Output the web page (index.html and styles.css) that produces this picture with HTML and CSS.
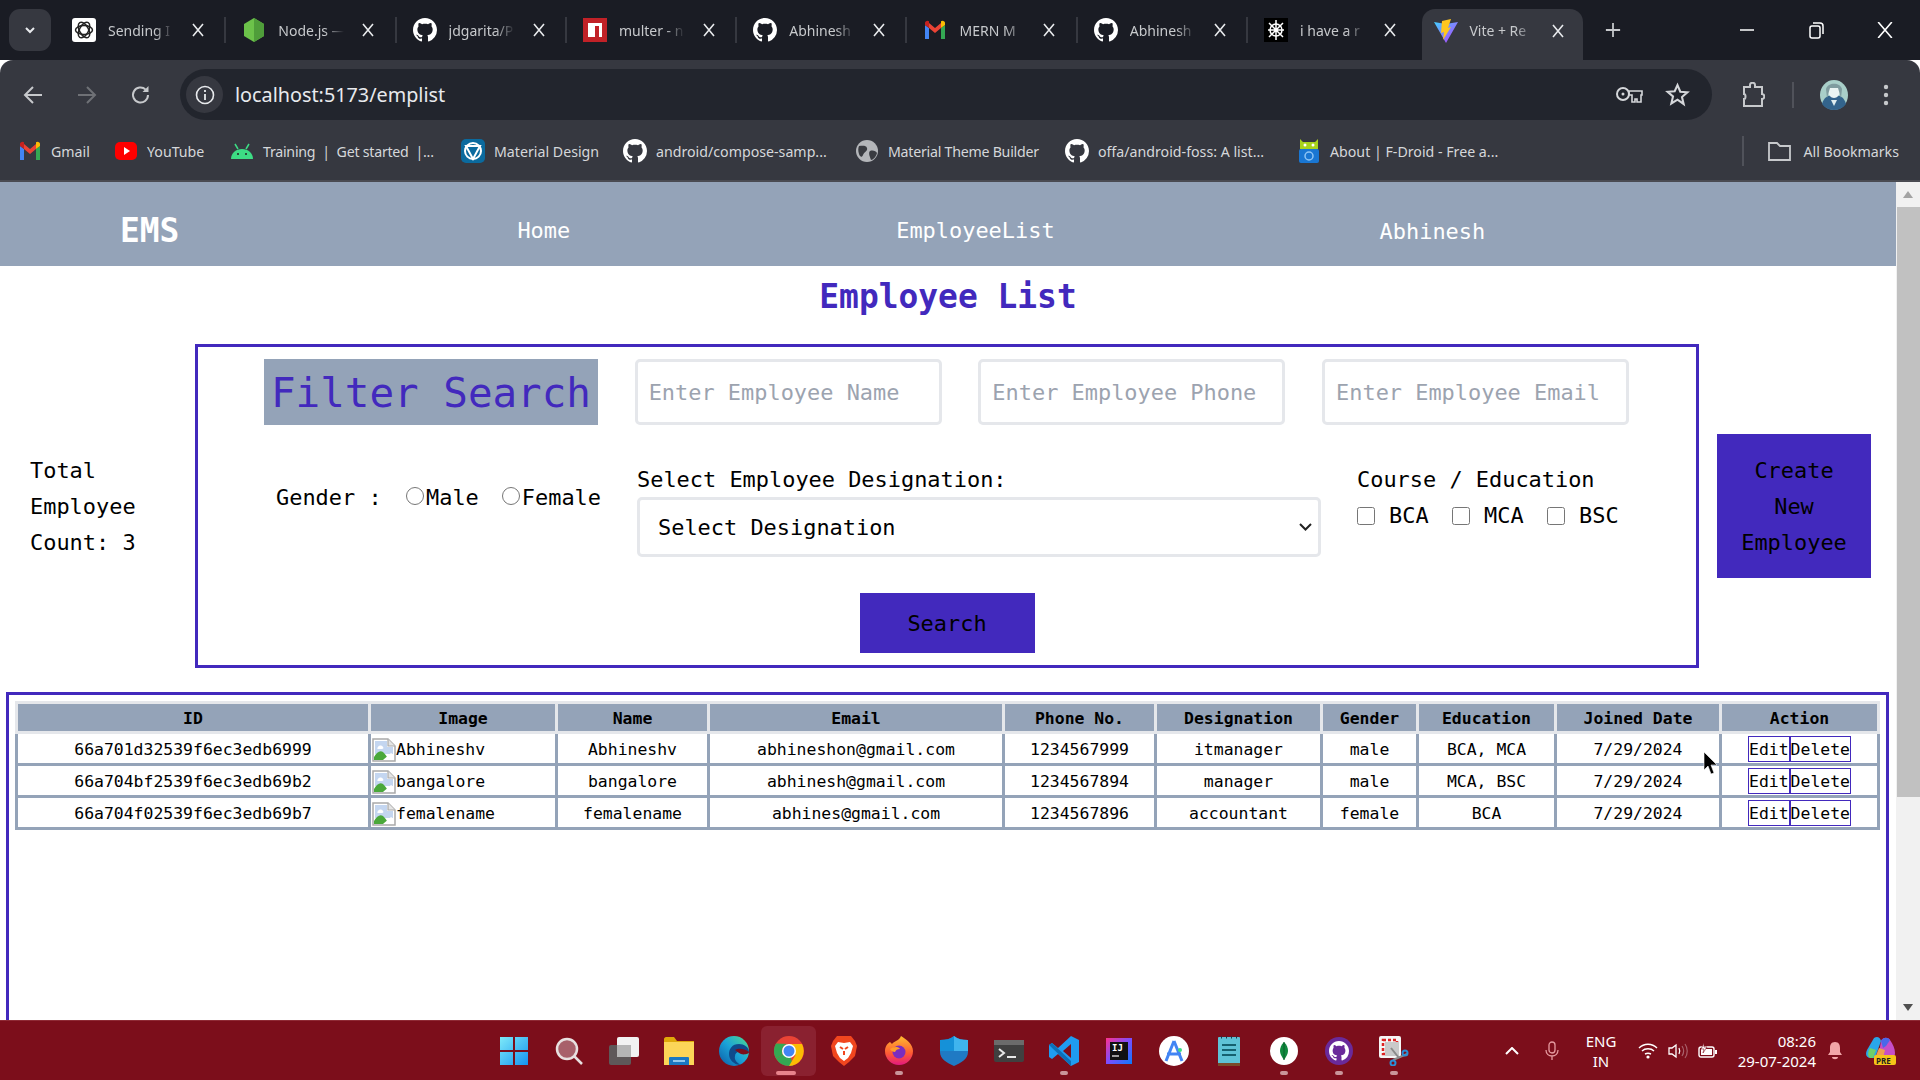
FILE: index.html
```html
<!doctype html>
<html>
<head>
<meta charset="utf-8">
<title>Vite + React</title>
<link rel="stylesheet" href="styles.css">
</head>
<body>
<svg class="defs"><symbol id="gh" viewBox="0 0 16 16"><path fill="#fff" d="M8 0C3.58 0 0 3.58 0 8c0 3.54 2.29 6.53 5.47 7.59.4.07.55-.17.55-.38 0-.19-.01-.82-.01-1.49-2.01.37-2.53-.49-2.69-.94-.09-.23-.48-.94-.82-1.13-.28-.15-.68-.52-.01-.53.63-.01 1.08.58 1.23.82.72 1.21 1.87.87 2.33.66.07-.52.28-.87.51-1.07-1.78-.2-3.64-.89-3.64-3.95 0-.87.31-1.59.82-2.15-.08-.2-.36-1.02.08-2.12 0 0 .67-.21 2.2.82.64-.18 1.32-.27 2-.27.68 0 1.36.09 2 .27 1.53-1.04 2.2-.82 2.2-.82.44 1.1.16 1.92.08 2.12.51.56.82 1.27.82 2.15 0 3.07-1.87 3.75-3.65 3.95.29.25.54.73.54 1.48 0 1.07-.01 1.93-.01 2.2 0 .21.15.46.55.38A8.013 8.013 0 0016 8c0-4.42-3.58-8-8-8z"/></symbol><symbol id="gmail" viewBox="0 0 24 24"><path fill="#4285f4" d="M2 21h4V10L2 7z"/><path fill="#34a853" d="M18 21h4V7l-4 3z"/><path fill="#ea4335" d="M6 10V5l6 5 6-5v5l-6 5z"/><path fill="#c5221f" d="M2 7V5c0-2 2.500-3 4-1.800L6 5v5z"/><path fill="#fbbc04" d="M22 7V5c0-2-2.500-3-4-1.800V10z"/></symbol><symbol id="x" viewBox="0 0 14 14"><path d="M2 1l10 12M12 1L2 13" stroke="#e8eaed" stroke-width="1.600" fill="none"/></symbol><symbol id="brokenimg" viewBox="0 0 24 24"><path d="M1 1h15l7 7v15H1z" fill="#fff" stroke="#a9a9a9" stroke-width="1.500"/><path d="M16 1v7h7" fill="#e4e4e4" stroke="#a9a9a9" stroke-width="1.200"/><path d="M3 3h12v6h6v7H3z" fill="#c4d6f0"/><path d="M6 9c1-2 4-2 5 0 1 1 0 2-1 2H6c-1 0-1-1 0-2z" fill="#fff"/><path d="M2 22v-3c3-5 6-7 9-5 2 2 5 6 6 8z" fill="#4aa83a"/><path d="M11 22l8-7 3 2v5z" fill="#fff"/></symbol></svg>
<div class="browser">
	<div class="tabstrip">
		<div class="tabsearch"><svg width="14" height="14" viewBox="0 0 14 14"><path d="M3 5l4 4 4-4" stroke="#e8eaed" stroke-width="2" fill="none"/></svg></div>
		<div class="tab">
			<svg class="fav" viewBox="0 0 24 24"><rect width="24" height="24" rx="3" fill="#fff"/><g fill="none" stroke="#222" stroke-width="1.500"><ellipse cx="12" cy="12" rx="8.500" ry="4.500"/><ellipse cx="12" cy="12" rx="8.500" ry="4.500" transform="rotate(60 12 12)"/><ellipse cx="12" cy="12" rx="8.500" ry="4.500" transform="rotate(120 12 12)"/></g></svg>
			<span class="title">Sending I</span><svg class="close"><use href="#x"/></svg>
		</div>
		<div class="tab">
			<svg class="fav" viewBox="0 0 24 24"><path d="M12 0l10 6v12l-10 6-10-6V6z" fill="#6cc24a"/><path d="M12 0l10 6v12l-10 6z" fill="#4f9d3a"/></svg>
			<span class="title">Node.js —</span><svg class="close"><use href="#x"/></svg>
		</div>
		<div class="tab">
			<svg class="fav"><use href="#gh"/></svg>
			<span class="title">jdgarita/P</span><svg class="close"><use href="#x"/></svg>
		</div>
		<div class="tab">
			<svg class="fav" viewBox="0 0 24 24"><rect width="24" height="24" fill="#c12127"/><path d="M5 5h14v14h-3V8h-4v11H5z" fill="#fff"/></svg>
			<span class="title">multer - n</span><svg class="close"><use href="#x"/></svg>
		</div>
		<div class="tab">
			<svg class="fav"><use href="#gh"/></svg>
			<span class="title">Abhinesh</span><svg class="close"><use href="#x"/></svg>
		</div>
		<div class="tab">
			<svg class="fav"><use href="#gmail"/></svg>
			<span class="title">MERN M</span><svg class="close"><use href="#x"/></svg>
		</div>
		<div class="tab">
			<svg class="fav"><use href="#gh"/></svg>
			<span class="title">Abhinesh</span><svg class="close"><use href="#x"/></svg>
		</div>
		<div class="tab last">
			<svg class="fav" viewBox="0 0 24 24"><rect width="24" height="24" fill="#000"/><g stroke="#fff" stroke-width="1.500" fill="none"><path d="M12 2v20M5 5l14 14M19 5L5 19M4 12h16"/><circle cx="12" cy="12" r="6"/></g></svg>
			<span class="title">i have a r</span><svg class="close"><use href="#x"/></svg>
		</div>
		<div class="tab active">
			<svg class="fav" viewBox="0 0 24 24"><defs><linearGradient id="vt" x1="0" y1="0" x2="1" y2="1"><stop offset="0" stop-color="#41d1ff"/><stop offset="1" stop-color="#bd34fe"/></linearGradient></defs><path d="M0 3l12 2 12-2-12 21z" fill="url(#vt)"/><path d="M17 0L8 2 7 14l3-1-1 8 8-13-3 1z" fill="#ffc61e"/></svg>
			<span class="title">Vite + Re</span><svg class="close"><use href="#x"/></svg>
		</div>
		<svg class="newtab" viewBox="0 0 18 18"><path d="M9 1v16M1 9h16" stroke="#c7c9cc" stroke-width="2"/></svg>
		<div class="winctl">
			<svg width="16" height="16" viewBox="0 0 16 16"><path d="M1 8h14" stroke="#fff" stroke-width="1.500"/></svg>
			<svg width="16" height="18" viewBox="0 0 16 18"><rect x="2" y="5" width="10" height="12" rx="2" fill="none" stroke="#fff" stroke-width="1.500"/><path d="M5 2h7c2 0 3 1 3 3v8" fill="none" stroke="#fff" stroke-width="1.500"/></svg>
			<svg width="16" height="16" viewBox="0 0 14 14"><path d="M1 0l12 14M13 0L1 14" stroke="#fff" stroke-width="1.400"/></svg>
		</div>
	</div>
	<div class="toolbar">
		<svg class="navbtn" viewBox="0 0 20 20"><path d="M19 10H2M10 2l-8 8 8 8" fill="none" stroke="#c7c9cc" stroke-width="2"/></svg>
		<svg class="navbtn fwd" viewBox="0 0 20 20"><path d="M1 10h17M10 2l8 8-8 8" fill="none" stroke="#6f7176" stroke-width="2"/></svg>
		<svg class="navbtn" viewBox="0 0 20 20"><path d="M17 10a7.500 7.500 0 1 1-2.300-5.400" fill="none" stroke="#c7c9cc" stroke-width="2"/><path d="M17.500 1v6h-6z" fill="#c7c9cc"/></svg>
		<div class="urlbar">
			<div class="infobtn"><svg width="20" height="20" viewBox="0 0 20 20"><circle cx="10" cy="10" r="8.500" fill="none" stroke="#e8eaed" stroke-width="1.600"/><path d="M10 9v6M10 5v2" stroke="#e8eaed" stroke-width="1.800"/></svg></div>
			<span class="url">localhost:5173/emplist</span>
			<svg class="key" width="28" height="18" viewBox="0 0 28 18"><circle cx="8" cy="8" r="6" fill="none" stroke="#d5d7da" stroke-width="2"/><circle cx="8" cy="8" r="1.500" fill="#d5d7da"/><path d="M14 5h13v4h-1v7h-4v-3h-2v3h-3V9h-3z" fill="none" stroke="#d5d7da" stroke-width="1.600"/></svg>
			<svg class="star" width="25" height="25" viewBox="0 0 24 24"><path d="M12 3l2.700 6.300 6.800.6-5.200 4.500 1.600 6.700L12 17l-5.900 3.600 1.600-6.700-5.200-4.500 6.800-.6z" fill="none" stroke="#d5d7da" stroke-width="2"/></svg>
		</div>
		<svg class="ext" width="23" height="26" viewBox="0 0 23 26"><path d="M2 5h6V3c0-3 5-3 5 0v2h7v7c3 0 3 5 0 5v7H2v-7c2 0 2-5 0-5z" fill="none" stroke="#c7c9cc" stroke-width="2"/></svg>
		<div class="tbsep"></div>
		<svg class="avatar" width="30" height="30" viewBox="0 0 30 30"><ellipse cx="15" cy="15" rx="14" ry="15" fill="#a9cfc9"/><path d="M3 24c2-7 6-9 12-9s10 2 12 9c-3 4-7 6-12 6s-9-2-12-6z" fill="#33648c"/><ellipse cx="15" cy="11" rx="6" ry="7" fill="#eaf4f3"/><path d="M7 9c2-7 14-7 16 0l-1 9-3-10h-8l-3 10z" fill="#7f9c9f"/><path d="M12 20l3 6 3-6z" fill="#dfeef0"/></svg>
		<svg class="dots" width="6" height="24" viewBox="0 0 6 24"><circle cx="3" cy="4" r="2.200" fill="#c7c9cc"/><circle cx="3" cy="12" r="2.200" fill="#c7c9cc"/><circle cx="3" cy="20" r="2.200" fill="#c7c9cc"/></svg>
	</div>
	<div class="bookmarks">
		<div class="bm"><svg class="bmi"><use href="#gmail"/></svg><span>Gmail</span></div>
		<div class="bm"><svg class="bmi" viewBox="0 0 24 24"><rect x="1" y="3" width="22" height="18" rx="5" fill="#f00"/><path d="M10 8v8l6-4z" fill="#fff"/></svg><span>YouTube</span></div>
		<div class="bm"><svg class="bmi" viewBox="0 0 24 24"><path d="M1 20c0-6 5-10 11-10s11 4 11 10z" fill="#3ddc84"/><path d="M5 5l3 5M19 5l-3 5" stroke="#3ddc84" stroke-width="1.500"/><circle cx="8" cy="15" r="1" fill="#222"/><circle cx="16" cy="15" r="1" fill="#222"/></svg><span class="tight">Training &nbsp;|&nbsp; Get started &nbsp;|...</span></div>
		<div class="bm"><svg class="bmi" viewBox="0 0 24 24"><rect width="24" height="24" rx="5" fill="#0b6a9e"/><circle cx="12" cy="12" r="8" fill="none" stroke="#fff" stroke-width="2"/><path d="M5 7h14l-7 13z" fill="none" stroke="#fff" stroke-width="2"/></svg><span>Material Design</span></div>
		<div class="bm"><svg class="bmi"><use href="#gh"/></svg><span>android/compose-samp...</span></div>
		<div class="bm"><svg class="bmi" viewBox="0 0 24 24"><circle cx="12" cy="12" r="11" fill="#b4b6ba"/><path d="M4 7c3 0 7-1 8 2s-3 4-4 7-3 2-4-1-1-6 0-8zM15 12c3-1 6 0 7 2-1 4-4 7-6 7-1-3-3-7-1-9z" fill="#393b41"/></svg><span class="tight">Material Theme Builder</span></div>
		<div class="bm"><svg class="bmi"><use href="#gh"/></svg><span>offa/android-foss: A list...</span></div>
		<div class="bm"><svg class="bmi" viewBox="0 0 24 24"><path d="M3 0l3 3h12l3-3v10H3z" fill="#a8d21c"/><rect x="2" y="10" width="20" height="14" rx="2" fill="#1976d2"/><circle cx="12" cy="17" r="4" fill="none" stroke="#8ec5f5" stroke-width="1.500"/><circle cx="8" cy="6" r="1.500" fill="#fff"/><circle cx="16" cy="6" r="1.500" fill="#fff"/></svg><span>About | F-Droid - Free a...</span></div>
		<div class="allbm">
			<svg class="bmi folder" viewBox="0 0 25 24"><path d="M2 4h8l3 3h10v14H2z" fill="none" stroke="#c7c9cc" stroke-width="1.800"/></svg><span>All Bookmarks</span>
		</div>
	</div>

	<div class="viewport">
		<div class="page">
			<nav class="nav">
				<span class="logo">EMS</span>
				<span class="navlink home">Home</span>
				<span class="navlink emp">EmployeeList</span>
				<span class="navlink user">Abhinesh</span>
			</nav>
			<h1 class="heading">Employee List</h1>
			<section class="filterarea">
				<div class="count">Total Employee Count: 3</div>
				<form class="filterbox">
					<div class="row1">
						<h2 class="filtertitle">Filter Search</h2>
						<input class="field" placeholder="Enter Employee Name">
						<input class="field" placeholder="Enter Employee Phone">
						<input class="field" placeholder="Enter Employee Email">
					</div>
					<div class="row2">
						<div class="gender">
							<span class="genderlabel">Gender :</span>
							<label class="opt"><input type="radio" name="g">Male</label>
							<label class="opt"><input type="radio" name="g">Female</label>
						</div>
						<div class="desig">
							<label class="lbl">Select Employee Designation:</label>
							<div class="selwrap">
								<select class="sel"><option>Select Designation</option></select>
								<svg class="chev" width="13" height="8" viewBox="0 0 13 8"><path d="M1 1l5.500 5.500L12 1" fill="none" stroke="#222" stroke-width="2"/></svg>
							</div>
						</div>
						<div class="course">
							<div class="lbl">Course / Education</div>
							<div class="checks">
								<label class="chk"><input type="checkbox">BCA</label>
								<label class="chk"><input type="checkbox">MCA</label>
								<label class="chk"><input type="checkbox">BSC</label>
							</div>
						</div>
					</div>
					<button type="button" class="searchbtn">Search</button>
				</form>
				<button type="button" class="createbtn">Create New Employee</button>
			</section>
			<section class="tablepanel">
				<table class="emptable">
					<thead>
						<tr><th>ID</th><th>Image</th><th>Name</th><th>Email</th><th>Phone No.</th><th>Designation</th><th>Gender</th><th>Education</th><th>Joined Date</th><th>Action</th></tr>
					</thead>
					<tbody>
						<tr><td>66a701d32539f6ec3edb6999</td><td class="imgcell"><svg class="broken"><use href="#brokenimg"/></svg>Abhineshv</td><td>Abhineshv</td><td>abhineshon@gmail.com</td><td>1234567999</td><td>itmanager</td><td>male</td><td>BCA, MCA</td><td>7/29/2024</td><td class="actcell"><button class="act">Edit</button><button class="act">Delete</button></td></tr>
						<tr><td>66a704bf2539f6ec3edb69b2</td><td class="imgcell"><svg class="broken"><use href="#brokenimg"/></svg>bangalore</td><td>bangalore</td><td>abhinesh@gmail.com</td><td>1234567894</td><td>manager</td><td>male</td><td>MCA, BSC</td><td>7/29/2024</td><td class="actcell"><button class="act">Edit</button><button class="act">Delete</button></td></tr>
						<tr><td>66a704f02539f6ec3edb69b7</td><td class="imgcell"><svg class="broken"><use href="#brokenimg"/></svg>femalename</td><td>femalename</td><td>abhines@gmail.com</td><td>1234567896</td><td>accountant</td><td>female</td><td>BCA</td><td>7/29/2024</td><td class="actcell"><button class="act">Edit</button><button class="act">Delete</button></td></tr>
					</tbody>
				</table>
			</section>
			<svg class="cursor" width="14" height="23" viewBox="0 0 14 23"><path d="M1 0v18l4-4 3 8 3-1-3-8h6z" fill="#000" stroke="#fff" stroke-width=".6"/></svg>
		</div>
		<div class="scrollbar">
			<div class="sbbtn"><svg width="10" height="7" viewBox="0 0 10 7"><path d="M5 0l5 7H0z" fill="#a3a3a3"/></svg></div>
			<div class="sbthumb"></div>
			<div class="sbrest"></div>
			<div class="sbbtn"><svg width="10" height="7" viewBox="0 0 10 7"><path d="M0 0h10L5 7z" fill="#505050"/></svg></div>
		</div>
	</div>

	<div class="taskbar">
		<div class="taskicons">
			<div class="ti"><svg width="30" height="30" viewBox="0 0 30 30"><defs><linearGradient id="wn" x1="0" y1="0" x2="1" y2="1"><stop offset="0" stop-color="#7eeaf8"/><stop offset="1" stop-color="#1593f0"/></linearGradient></defs><path d="M1 1h13v13H1zM16 1h13v13H16zM1 16h13v13H1zM16 16h13v13H16z" fill="url(#wn)"/></svg></div>
			<div class="ti"><svg width="28" height="28" viewBox="0 0 28 28"><circle cx="12" cy="12" r="10" fill="#a8606a" stroke="#e8e0e0" stroke-width="2.500"/><path d="M19 19l8 8" stroke="#e8e0e0" stroke-width="2.500"/></svg></div>
			<div class="ti"><svg width="30" height="28" viewBox="0 0 30 28"><rect x="8" y="0" width="22" height="20" rx="2" fill="#f2f2f2"/><rect x="0" y="8" width="22" height="20" rx="2" fill="#5d5d5d" opacity=".95"/><rect x="8" y="8" width="14" height="12" fill="#b5b5b5"/></svg></div>
			<div class="ti"><svg width="30" height="28" viewBox="0 0 30 28"><path d="M0 2c0-1 1-2 2-2h8l3 4h17v4H0z" fill="#e0a80a"/><path d="M0 5h30v23H0z" fill="#fcd558"/><path d="M5 21c0-1 1-1 1-1h18s1 0 1 1v7H5z" fill="#1a78c2"/><rect x="9" y="23" width="12" height="2" fill="#8fc8ee"/></svg></div>
			<div class="ti"><svg width="30" height="30" viewBox="0 0 30 30"><defs><linearGradient id="eg" x1="0" y1="1" x2="1" y2="0"><stop offset="0" stop-color="#0c59a4"/><stop offset=".5" stop-color="#1ba3d8"/><stop offset="1" stop-color="#4fdc8c"/></linearGradient></defs><circle cx="15" cy="15" r="15" fill="url(#eg)"/><path d="M30 16c0-5-5-8-10-8-7 0-10 5-10 10 0 6 5 11 12 11-4-2-7-5-6-9 0-3 3-5 6-4 3 0 6 2 8 0z" fill="#0f4a8c"/><path d="M16 14c3-2 9-2 14 2 0 2-5 3-8 2s-4-3-6-4z" fill="#7c0e1b"/></svg></div>
			<div class="ti running"><svg width="30" height="30" viewBox="0 0 30 30"><circle cx="15" cy="15" r="15" fill="#ea4335"/><path d="M15 15L2 22.500A15 15 0 0 0 15 30 15 15 0 0 0 19 29.500z" fill="#34a853"/><path d="M15 8h13A15 15 0 0 1 15 30l6.500-11z" fill="#fbbc04"/><path d="M15 8A7 7 0 0 0 8.900 18.500L2 22.500A15 15 0 0 1 2 7.500z" fill="#34a853"/><circle cx="15" cy="15" r="7" fill="#fff"/><circle cx="15" cy="15" r="5.500" fill="#4285f4"/></svg><i class="dash"></i></div>
			<div class="ti"><svg width="26" height="30" viewBox="0 0 26 30"><path d="M6 0h14l4 5 2 5-2 10-6 6-5 4-5-4-6-6L0 10l2-5z" fill="#f1461f"/><path d="M7 6l6 1 6-1 3 4-2 7-3 5-4 3-4-3-3-5-2-7z" fill="#fff"/><path d="M9 11l3 2M17 11l-3 2M13 15v4" stroke="#f1461f" stroke-width="2"/></svg></div>
			<div class="ti"><svg width="28" height="29" viewBox="0 0 28 29"><defs><linearGradient id="ff" x1="0" y1="0" x2="0" y2="1"><stop offset="0" stop-color="#ffbd2f"/><stop offset=".6" stop-color="#ff5a34"/><stop offset="1" stop-color="#e3197f"/></linearGradient></defs><path d="M14 29A14 14 0 0 1 0 15C0 10 3 7 5 6l2 2c2-3 7-3 9-8 5 3 12 8 12 15a14 14 0 0 1-14 14z" fill="url(#ff)"/><circle cx="14" cy="16" r="6.500" fill="#7b2dbf"/><path d="M5 13c3-2 8-3 10 0-3 0-4 1-5 3-2 0-4-1-5-3z" fill="#ff9d2b"/></svg><i class="dot"></i></div>
			<div class="ti"><svg width="28" height="30" viewBox="0 0 28 30"><path d="M14 0c4 3 8 4 14 4v12c0 7-7 11-14 14C7 27 0 23 0 16V4c6 0 10-1 14-4z" fill="#1f7ac4"/><path d="M14 0c4 3 8 4 14 4v11H14z" fill="#3fb4ee"/><path d="M14 15H0V4c6 0 10-1 14-4z" fill="#1591d8"/></svg></div>
			<div class="ti"><svg width="30" height="22" viewBox="0 0 30 22"><rect width="30" height="22" rx="2" fill="#404040"/><rect width="30" height="5" fill="#6b6b6b"/><path d="M5 9l5 4-5 4" fill="none" stroke="#e8e8e8" stroke-width="2"/><path d="M13 17h9" stroke="#e8e8e8" stroke-width="2"/></svg></div>
			<div class="ti"><svg width="30" height="30" viewBox="0 0 30 30"><path d="M22 0l8 4v22l-8 4-13-12-6 5-3-2V9l3-2 6 5z" fill="#1f9cf0"/><path d="M22 8l-8 7 8 7z" fill="#7c0e1b"/><path d="M0 9l3-2 19 18v5z" fill="#0d6fb8"/></svg><i class="dot"></i></div>
			<div class="ti"><svg width="26" height="26" viewBox="0 0 26 26"><defs><linearGradient id="ij" x1="0" y1="0" x2="1" y2="1"><stop offset="0" stop-color="#ff318c"/><stop offset=".5" stop-color="#7b4dff"/><stop offset="1" stop-color="#087cfa"/></linearGradient></defs><rect width="26" height="26" fill="url(#ij)"/><rect x="4" y="4" width="18" height="18" fill="#111"/><text x="6" y="13" class="ijtext">IJ</text><path d="M6 18h7" stroke="#fff" stroke-width="1.200"/></svg></div>
			<div class="ti"><svg width="30" height="30" viewBox="0 0 30 30"><circle cx="15" cy="15" r="15" fill="#fff"/><path d="M15 5L7 25M15 5l8 20M8 18h14" stroke="#4285f4" stroke-width="3" fill="none"/><circle cx="21" cy="14" r="2" fill="#3ddc84"/></svg></div>
			<div class="ti"><svg width="22" height="30" viewBox="0 0 22 30"><rect y="1" width="22" height="28" rx="1" fill="#5ec2d6"/><path d="M0 27h22v3H0z" fill="#7a4a2a"/><path d="M4 9h14M4 14h14M4 19h14" stroke="#15606f" stroke-width="2"/><path d="M3 1h1M8 1h1M13 1h1M18 1h1" stroke="#234" stroke-width="3"/></svg></div>
			<div class="ti"><svg width="28" height="28" viewBox="0 0 28 28"><circle cx="14" cy="14" r="14" fill="#fff"/><path d="M14 5c3 3 4 6 4 9s-2 6-4 9c-2-3-4-6-4-9s1-6 4-9z" fill="#10893e"/><path d="M14 5v18" stroke="#0b5d2a"/></svg><i class="dot"></i></div>
			<div class="ti"><svg width="28" height="28" viewBox="0 0 28 28"><circle cx="14" cy="14" r="14" fill="#6a2a9a"/><use href="#gh" x="4" y="4" width="20" height="20"/></svg><i class="dot"></i></div>
			<div class="ti"><svg width="30" height="30" viewBox="0 0 30 30"><rect width="22" height="22" rx="2" fill="#f5f5f5"/><rect x="4" y="4" width="14" height="14" fill="none" stroke="#d22" stroke-width="2.500" stroke-dasharray="3 2"/><rect x="6" y="6" width="14" height="14" fill="#c9c9c9"/><path d="M12 12l8 10M28 18L14 24" stroke="#8a8a8a" stroke-width="2"/><circle cx="26" cy="17" r="2.500" fill="none" stroke="#2a8fd8" stroke-width="2"/><circle cx="14" cy="27" r="2.500" fill="none" stroke="#2a8fd8" stroke-width="2"/></svg><i class="dot"></i></div>
		</div>
		<div class="tray">
			<svg class="t-up" width="14" height="8" viewBox="0 0 14 8"><path d="M1 7l6-6 6 6" fill="none" stroke="#fff" stroke-width="2"/></svg>
			<svg class="t-mic" width="14" height="20" viewBox="0 0 14 20"><rect x="4" y="1" width="6" height="11" rx="3" fill="none" stroke="#e59a9f" stroke-width="1.300"/><path d="M1 9c0 4 3 6 6 6s6-2 6-6M7 15v4" fill="none" stroke="#e59a9f" stroke-width="1.300"/></svg>
			<div class="lang">ENG<br>IN</div>
			<svg class="t-wifi" width="20" height="16" viewBox="0 0 20 16"><path d="M1 5c5-5 13-5 18 0M4 8c3-3 9-3 12 0M7 11c2-1 4-1 6 0" fill="none" stroke="#fff" stroke-width="1.400"/><circle cx="10" cy="14" r="1.600" fill="#fff"/></svg>
			<svg class="t-vol" width="20" height="16" viewBox="0 0 20 16"><path d="M1 5h3l4-3v12l-4-3H1z" fill="none" stroke="#fff" stroke-width="1.300"/><path d="M11 5c1 2 1 4 0 6" fill="none" stroke="#fff" stroke-width="1.200"/><path d="M14 3c2 3 2 7 0 10M17 1c3 4 3 10 0 14" fill="none" stroke="#a8606a" stroke-width="1.200"/></svg>
			<svg class="t-bat" width="20" height="16" viewBox="0 0 20 16"><rect x="1" y="4" width="15" height="10" rx="2" fill="none" stroke="#fff" stroke-width="1.400"/><rect x="3" y="6" width="11" height="6" fill="#fff"/><path d="M18 7v4" stroke="#fff" stroke-width="2"/><path d="M6 0L3 6h3l-1 4 4-6H6z" fill="#fff" stroke="#7c0e1b" stroke-width=".6"/></svg>
			<div class="clock">08:26<br>29-07-2024</div>
			<svg class="t-bell" width="16" height="20" viewBox="0 0 16 20"><path d="M8 1c4 0 5 3 5 6v4l2 3H1l2-3V7c0-3 1-6 5-6z" fill="#f2a6a8"/><path d="M5 16h6c0 3-6 3-6 0z" fill="#f2a6a8"/></svg>
			<svg class="t-cop" width="30" height="30" viewBox="0 0 30 30"><path d="M8 2c3-2 6-1 7 3L9 22H5C0 22-1 18 1 14z" fill="#2aa6e8"/><path d="M4 22c-3-2-2-7 0-10l6 2-3 8z" fill="#6fd06a"/><path d="M15 5c2-4 7-4 9-1 3 4 5 9 5 13 0 4-3 6-7 6H12z" fill="#c64fc8"/><path d="M15 5c2-4 7-4 9-1l-4 6-3 2z" fill="#4a68e8"/><path d="M9 22l4-10 6 2-2 8z" fill="#f0a050"/><rect x="8" y="19" width="22" height="10" rx="2" fill="#f5c518"/><text x="10" y="27.500" class="pretext">PRE</text></svg>
		</div>
	</div>
</div>
</body>
</html>
```
FILE: styles.css
```css
*{margin:0; padding:0; box-sizing:border-box;}
html,body{height:100%; overflow:hidden;}
body{font-family:"DejaVu Sans Mono","Liberation Mono",monospace; background:#fff;}
.defs{display:none;}
.browser{height:1080px; display:flex; flex-direction:column; font-family:"Noto Sans","Open Sans",sans-serif;}

.tabstrip{height:60px; background:#1a1c24; display:flex; align-items:center; color:#c7c9cc; font-size:14px; padding-left:9px;}
.tabsearch{width:42px; height:42px; flex:none; background:#363840; border-radius:11px; display:flex; align-items:center; justify-content:center; margin-right:5px;}
.tab{width:170.300px; height:26px; flex:none; display:flex; align-items:center; padding-left:16px; border-right:2px solid #363840;}
.tab.last{border-right:none;}
.fav{width:24px; height:24px; flex:none;}
.title{width:66px; margin-left:12px; white-space:nowrap; overflow:hidden; -webkit-mask-image:linear-gradient(90deg,#000 70%,transparent); mask-image:linear-gradient(90deg,#000 70%,transparent);}
.close{width:14px; height:14px; margin-left:17px; flex:none;}
.tab.active{width:161px; height:51px; margin:9px 0 0 4px; padding:0 0 8px 12px; background:#363840; border:none; border-radius:13px 13px 0 0;}
.tab.active .title{margin-left:11px;}
.tab.active .close{margin-left:16px;}
.newtab{width:16px; height:16px; margin-left:22px;}
.winctl{margin-left:auto; display:flex; align-items:center; gap:53px; padding-right:27px;}

.toolbar{height:69px; background:#363840; border-radius:13px 13px 0 0; display:flex; align-items:center; padding-left:23px;}
.navbtn{width:20px; height:20px; margin-right:34px; flex:none;}
.urlbar{width:1532px; height:51px; margin-left:-5px; background:#22252d; border-radius:26px; display:flex; align-items:center; padding-left:6px; color:#e8eaed;}
.infobtn{width:37px; height:37px; border-radius:50%; background:#363840; display:flex; align-items:center; justify-content:center;}
.url{font-size:19.800px; margin-left:12px; flex:1;}
.key{margin-right:22px;}
.star{margin-right:22px;}
.ext{margin-left:30px; flex:none;}
.tbsep{width:2px; height:26px; background:#50525a; margin-left:27px;}
.avatar{margin-left:25px; flex:none;}
.dots{margin-left:34px; flex:none;}

.bookmarks{height:51px; background:#363840; display:flex; align-items:center; padding:0 0 7px 18px; color:#d5d7da; font-size:14.200px;}
.bm{display:flex; align-items:center; gap:9px; white-space:nowrap; flex:none;}
.bm:nth-child(1){width:96px;}
.bm:nth-child(2){width:116px;}
.bm:nth-child(3){width:231px;}
.bm:nth-child(4){width:162px;}
.bm:nth-child(5){width:232px;}
.bm:nth-child(6){width:210px;}
.bm:nth-child(7){width:232px;}
.tight{letter-spacing:-.25px;}
.bmi{width:24px; height:24px; flex:none;}
.folder{width:25px;}
.allbm{margin-left:auto; display:flex; align-items:center; gap:12px; height:30px; border-left:2px solid #50525a; padding:0 21px 0 23px; white-space:nowrap;}

.viewport{flex:1; min-height:0; display:flex; border-top:2px solid #4a4b52;}
.page{flex:1; min-width:0; overflow:hidden; position:relative; font-family:"DejaVu Sans Mono","Liberation Mono",monospace; font-size:21.930px; line-height:36px; color:#000;}

.nav{height:84px; padding:14px 0 0 120px; background:#94a3b8; color:#fff; display:flex; align-items:center;}
.logo{font-size:32.900px; font-weight:bold;}
.home{margin-left:338px;}
.emp{margin-left:326px;}
.user{margin-left:325px; padding-top:2px;}

.heading{font-size:32.900px; line-height:54px; font-weight:bold; color:#4229bd; text-align:center; margin:4px 0 20px;}

.filterarea{display:flex; align-items:center;}
.count{width:195px; padding:2px 40px 0 30px;}
.filterbox{width:1504px; height:324px; border:3px solid #4229bd; padding:12px 0; display:flex; flex-direction:column; align-items:center; gap:37px;}
.row1{display:flex; gap:36.700px; margin-left:-1px;}
.filtertitle{width:334px; height:66px; background:#94a3b8; color:#4229bd; font-size:40.900px; line-height:69px; font-weight:normal; text-align:center;}
.field{width:307px; height:66px; border:3px solid #e5e7eb; border-radius:5px; padding:0 11px; font:inherit; outline:none;}
.field::placeholder{color:#9ca3af;}
.row2{width:100%; height:94px; display:flex; padding-left:78px;}
.gender{width:330px; flex:none; margin-top:18px; height:36px; display:flex; align-items:center;}
.genderlabel{width:130px; flex:none;}
.opt{display:flex; flex:none; align-items:center; margin-right:23px;}
.opt input{width:18px; height:18px; margin:-5px 2px 0 0;}
.opt:last-child{margin-right:0;}
.desig{width:684px; margin-left:31px;}
.lbl{display:block; height:35px;}
.selwrap{position:relative;}
.sel{width:684px; height:60px; border:3px solid #e5e7eb; border-radius:5px; padding:2px 0 0 18px; font:inherit; background:#fff; color:#000; outline:none; appearance:none; -webkit-appearance:none;}
.chev{position:absolute; right:9px; top:26px;}
.course{margin-left:36px;}
.checks{display:flex; height:36px; margin-top:1px; align-items:center;}
.chk{display:flex; align-items:center; gap:14px; width:95px;}
.chk input{width:18px; height:18px; margin:0;}
.searchbtn{width:175px; height:60px; padding-top:1px; background:#4229bd; border:none; font:inherit; color:#000;}
.createbtn{width:154px; height:144px; margin-left:18px; padding:2px 20px 0; background:#4229bd; border:none; font:inherit; color:#000;}

.tablepanel{width:1883px; height:500px; margin:24px 0 0 6px; border:3px solid #4229bd; padding:6px;}
.emptable{width:1865px; border-collapse:collapse; table-layout:fixed; font-size:16.450px; text-align:center;}
.emptable th{height:30px; line-height:25px; padding:2px 0 0; background:#94a3b8; border:3px solid #e5e7eb; font-weight:bold;}
.emptable td{height:32px; line-height:26px; padding:2px 0 0; border:3px solid #94a3b8; white-space:nowrap;}
.emptable th:nth-child(1){width:353px;}
.emptable th:nth-child(2){width:187px;}
.emptable th:nth-child(3){width:152px;}
.emptable th:nth-child(4){width:295px;}
.emptable th:nth-child(5){width:152px;}
.emptable th:nth-child(6){width:166px;}
.emptable th:nth-child(7){width:96px;}
.emptable th:nth-child(8){width:138px;}
.emptable th:nth-child(9){width:165px;}
.emptable td.imgcell{text-align:left; padding:2px 0 0 1px;}
.emptable td.actcell{vertical-align:top;}
.broken{width:24px; height:24px; vertical-align:top; margin-top:1px;}
.act{height:26px; line-height:24px; padding:0; background:#fff; border:1px solid #4229bd; font:inherit; vertical-align:top; color:#000;}

.cursor{position:absolute; left:1703px; top:570px;}

.scrollbar{width:24px; flex:none; background:#f1f1f1; display:flex; flex-direction:column;}
.sbbtn{height:25px; display:flex; align-items:center; justify-content:center;}
.sbthumb{height:590px; margin-left:1px; background:#c1c1c1;}
.sbrest{flex:1;}

.taskbar{height:60px; flex:none; background:#7c0e1b; border-top:1px solid #8f2a35; display:flex; align-items:center; color:#fff; font-family:"Noto Sans","Open Sans",sans-serif; font-size:15px;}
.taskicons{display:flex; margin-left:486px;}
.ti{width:55px; height:50px; display:flex; align-items:center; justify-content:center; position:relative;}
.ti.running{background:#8a2130; border-radius:6px;}
.dash{position:absolute; left:15px; bottom:1px; width:20px; height:4px; border-radius:2px; background:#e8838c;}
.dot{position:absolute; left:24px; bottom:1px; width:8px; height:4px; border-radius:2px; background:#c9959a;}
.ijtext{font-family:"DejaVu Sans Mono",monospace; font-size:9px; fill:#fff; font-weight:bold;}
.pretext{font-family:"Noto Sans",sans-serif; font-size:8px; font-weight:bold; fill:#222;}
.tray{margin-left:auto; display:flex; align-items:center; padding-right:24px;}
.t-mic{margin-left:26px;}
.lang{width:50px; margin-left:17px; text-align:center; line-height:20px;}
.t-wifi{margin-left:12px;}
.t-vol{margin-left:10px;}
.t-bat{margin-left:10px;}
.clock{width:98px; text-align:right; line-height:20px;}
.t-bell{margin-left:11px;}
.t-cop{margin-left:23px;}
```
